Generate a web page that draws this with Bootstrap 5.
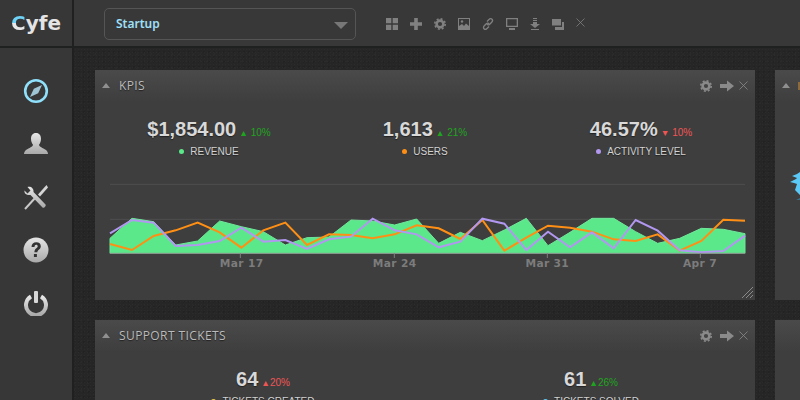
<!DOCTYPE html>
<html lang="en"><head><meta charset="utf-8"><title>Cyfe</title>
<link href="https://cdn.jsdelivr.net/npm/bootstrap@5.3.0/dist/css/bootstrap.min.css" rel="stylesheet">
<style>
html,body{height:400px;overflow:hidden;background:#262626}
.shell{width:800px;height:400px;overflow:hidden;font-family:"Liberation Sans",Arial,sans-serif}
.side{width:74px;flex:none;background:#373737;border-right:2px solid #1f2020;height:400px}
.brand{height:48px;border-bottom:2px solid #1f2020;font:700 20px/46px "DejaVu Sans",sans-serif;color:#e4e4e4;padding-left:11px}
.brand-c{background:linear-gradient(#6fd2f7 50%,#e8e8e8 50%);-webkit-background-clip:text;background-clip:text;color:transparent}
.sidenav{padding-top:30px;gap:27px}
.main{width:726px;flex:none}
.topbar{height:48px;background:#383838;border-bottom:2px solid #1f2020;padding:8px 0 0 30px}
.picker{width:252px;height:32px;border:1px solid #555;border-radius:5px;padding:0 7px 0 11px;font:600 12px/30px "Noto Sans",sans-serif;color:#9fe0fa;text-align:left}
.picker:hover{color:#9fe0fa;border-color:#555}
.tri{width:0;height:0;border-style:solid;border-width:7px 7px 0;border-color:#777 transparent transparent;margin-top:2px}
.tools{margin-left:30px;gap:12px;margin-top:4px;height:24px;color:#808080}
.stage{display:grid;grid-template-columns:660px 660px;grid-auto-rows:min-content;column-gap:20px;row-gap:20px;padding:22px 0 0 21px;width:1400px;height:352px;
 background-color:#262626;background-image:radial-gradient(#2b2b2b 1px,transparent 1px),radial-gradient(#222 1px,transparent 1px),radial-gradient(#2a2a2a 1px,transparent 1px);background-size:3px 3px,5px 5px,7px 7px;background-position:0 0,2px 1px,4px 3px}
.pane{background:linear-gradient(#4a4a4a,#3e3e3e 32px);color:#ccc;position:relative;border:0;border-radius:0;height:230px}
.pane-head{height:32px;padding:0 7px}
.cap{width:0;height:0;border-style:solid;border-width:0 4.5px 5px;border-color:transparent transparent #8f8f8f;margin-right:9px;margin-bottom:1px}
.pane-title{font:400 12px/1 "Open Sans",sans-serif;color:#bbb;text-shadow:0 1px 1px #222;letter-spacing:.4px}
.pane-tools{color:#8a8a8a;margin-bottom:1px}
.pane-tools .gap-a{margin:0 5px 0 8px}
.kpis{padding:15px 6px 0 6px;margin:0}
.kpis-two{padding:15px 0 0 4px}
.kpis>div{padding:0;text-align:center}
.big{font-size:20px;font-weight:700;line-height:24px;color:#d9d9d9;text-shadow:0 1px 1px #222}
.delta{font-size:10px;margin-left:3px}
.up{color:#1ea51e}.down{color:#f05555}
.lbl{font-size:10px;line-height:14px;margin-top:2px;color:#d2d2d2;text-shadow:0 1px 1px #222}
.dot{display:inline-block;width:5px;height:5px;border-radius:50%;margin-right:6px;vertical-align:1px}
.chart{display:block;margin-top:16px}
.chart text{font:700 32px "DejaVu Sans",sans-serif;fill:#7c7c7c;text-anchor:middle;letter-spacing:1px}
.grip{position:absolute;right:2px;bottom:2px}
.swirl{position:absolute;left:15px;top:102px}
.peek{position:absolute;left:23px;top:12px;width:3px;height:8px;background:#8b6a3e}
</style></head>
<body>
<svg width="0" height="0" class="position-absolute">
<defs>
<symbol id="gear" viewBox="0 0 12 12"><circle cx="6" cy="6" r="3.4" fill="none" stroke="currentColor" stroke-width="2.6"/><circle cx="6" cy="6" r="5.2" fill="none" stroke="currentColor" stroke-width="1.6" stroke-dasharray="2 2.08"/></symbol>
<symbol id="arrow" viewBox="0 0 14 12"><path d="M0 4h7V0.5L14 6l-7 5.5V8H0z" fill="currentColor"/></symbol>
<symbol id="cross" viewBox="0 0 9 9"><path d="M.5.5l8 8M8.5.5l-8 8" stroke="currentColor" stroke-width=".8" fill="none"/></symbol>
<linearGradient id="steel" x1="0" y1="0" x2="0" y2="1"><stop offset="0" stop-color="#e6e6e6"/><stop offset="1" stop-color="#a9a9a9"/></linearGradient>
</defs></svg>
<div class="shell d-flex">
 <aside class="side d-flex flex-column">
  <div class="brand"><span class="brand-c">C</span>yfe</div>
  <nav class="sidenav d-flex flex-column align-items-center">
   <svg width="26" height="26" viewBox="0 0 26 26"><circle cx="13" cy="13" r="10.800" fill="none" stroke="#8fe0fb" stroke-width="2.600"/><path d="M19 7l-3.800 8.200L7 19l3.800-8.200z" fill="#9fc4d4"/></svg>
   <svg width="26" height="26" viewBox="0 0 26 26"><path d="M13 2c3.400 0 5 2.600 5 5.800 0 2.700-1 4.700-2 6 .3 2 3.500 3.200 7 5.200 1 .6 2 2.500 2 4H1c0-1.500 1-3.400 2-4 3.500-2 6.700-3.200 7-5.200-1-1.300-2-3.300-2-6C8 4.600 9.600 2 13 2z" fill="url(#steel)"/></svg>
   <svg width="26" height="26" viewBox="0 0 26 26"><path d="M23.500 1l1.500 2.500-8 9-2-2z" fill="#d5d5d5"/><path d="M2 25L13 13" stroke="#c8c8c8" stroke-width="2"/><path d="M1.500 6.500l3 3 3-3-3-3.500c3-1 6.500 1 6 5l12 12.500c1 1.500-1.500 4-3 3L7.500 11c-4 .5-6.500-1.500-6-4.500z" fill="url(#steel)"/></svg>
   <svg width="26" height="26" viewBox="0 0 26 26"><circle cx="13" cy="13" r="12.500" fill="url(#steel)"/><path d="M8.500 10c0-3 2-4.800 4.800-4.800s4.500 1.600 4.500 4c0 3.300-3.400 3.300-3.400 6h-3c0-4 3.300-4 3.300-6 0-1-.7-1.500-1.500-1.500-1 0-1.600.8-1.700 2.300z" fill="#333"/><rect x="10.900" y="17" width="3" height="3" fill="#333"/></svg>
   <svg width="26" height="26" viewBox="0 0 26 26"><path d="M8 6.500a10 10 0 1 0 10 0" fill="none" stroke="url(#steel)" stroke-width="4"/><rect x="11" y="1" width="4" height="12" rx="1" fill="#d8d8d8"/></svg>
  </nav>
 </aside>
 <div class="main">
  <header class="topbar d-flex">
   <button type="button" class="btn picker d-flex justify-content-between align-items-center">Startup<span class="tri"></span></button>
   <div class="tools d-flex align-items-center">
    <svg width="12" height="12" viewBox="0 0 12 12"><path d="M0 0h5.300v5.300H0zM6.700 0H12v5.300H6.700zM0 6.700h5.300V12H0zM6.700 6.700H12V12H6.700z" fill="#808080"/></svg>
    <svg width="12" height="12" viewBox="0 0 12 12"><path d="M4.200 0h3.600v4.200H12v3.600H7.800V12H4.200V7.800H0V4.200h4.200z" fill="#808080"/></svg>
    <svg width="12" height="12"><use href="#gear"/></svg>
    <svg width="12" height="12" viewBox="0 0 12 12"><path d="M0 0h12v12H0z M1 1v10h10V1z" fill="#808080" fill-rule="evenodd"/><path d="M1 11V8l3-2 2 2 2-2.500L11 8v3z" fill="#808080"/><circle cx="4" cy="3.500" r="1.200" fill="#808080"/></svg>
    <svg width="12" height="12" viewBox="0 0 12 12"><g fill="none" stroke="#808080" stroke-width="1.300"><path d="M5 3.500l2-2c1-1 2.300-1 3 -.3s.7 2-.3 3l-2 2c-1 1-2.200.8-2.800 0"/><path d="M7 8.500l-2 2c-1 1-2.300 1-3 .3s-.7-2 .3-3l2-2c1-1 2.200-.8 2.800 0"/></g></svg>
    <svg width="12" height="12" viewBox="0 0 12 12"><path d="M0 0h12v9H0zM1.300 1.300v6.400h9.400V1.300zM3 10h6v2H3z" fill="#808080" fill-rule="evenodd"/></svg>
    <svg width="10" height="12" viewBox="0 0 10 12"><path d="M3 0h4v1H3zM3 2h4v1H3zM3 4h4v2h3l-5 4-5-4h3zM1 11h8v1H1z" fill="#808080"/></svg>
    <svg width="12" height="11" viewBox="0 0 12 11"><path d="M0 0h9v6.500H0z" fill="#808080"/><path d="M10 3h2v8H3V8h7z" fill="#808080"/></svg>
    <svg width="9" height="9" class="mb-1"><use href="#cross"/></svg>
   </div>
  </header>
  <main class="stage">
   <section class="card pane">
    <div class="pane-head d-flex align-items-center justify-content-between">
     <div class="d-flex align-items-center"><span class="cap"></span><span class="pane-title">KPIS</span></div>
     <div class="pane-tools d-flex align-items-center">
      <svg width="12" height="12"><use href="#gear"/></svg><svg width="14" height="12" class="gap-a"><use href="#arrow"/></svg><svg width="9" height="9"><use href="#cross"/></svg>
     </div>
    </div>
    <div class="row kpis">
     <div class="col-4"><span class="big">$1,854.00</span><span class="delta up"><small>▲</small> 10%</span><div class="lbl"><span class="dot" style="background:#5be88a"></span>REVENUE</div></div>
     <div class="col-4"><span class="big">1,613</span><span class="delta up"><small>▲</small> 21%</span><div class="lbl"><span class="dot" style="background:#ff8f14"></span>USERS</div></div>
     <div class="col-4"><span class="big">46.57%</span><span class="delta down"><small>▼</small> 10%</span><div class="lbl"><span class="dot" style="background:#b197f0"></span>ACTIVITY LEVEL</div></div>
    </div>
    <svg class="chart" width="660" height="100" viewBox="0 0 1980 300" aria-hidden="true">
     <path d="M45 28H1950M45 133H1950" stroke="#4f4f4f" stroke-width="3"/>
     <polygon fill="#5be88a" stroke="#6fe89a" stroke-width="3" points="45,235 45,190 111,130 176,140 242,210 308,198 374,138 439,155 505,170 571,210 636,188 702,186 768,135 833,138 899,150 965,132 1031,205 1096,172 1162,197 1228,165 1294,130 1359,212 1425,172 1491,130 1556,130 1622,170 1688,205 1754,190 1819,160 1885,163 1950,176 1950,235"/>
     <polyline fill="none" stroke="#ff8f14" stroke-width="6" points="45,207 111,225 176,183 242,166 308,143 374,172 439,218 505,166 571,143 636,210 702,178 768,180 833,190 899,178 965,151 1031,160 1096,192 1162,135 1228,227 1294,188 1359,152 1425,158 1491,170 1556,193 1622,198 1688,178 1754,227 1819,198 1885,134 1950,137"/>
     <polyline fill="none" stroke="#b197f0" stroke-width="6" points="45,175 111,135 176,143 242,213 308,210 374,198 439,158 505,200 571,195 636,222 702,193 768,185 833,131 899,166 965,178 1031,217 1096,200 1162,131 1228,146 1294,225 1359,170 1425,217 1491,172 1556,220 1622,135 1688,167 1754,226 1819,232 1885,228 1950,182"/>
     <path d="M45 235H1950" stroke="#8a8a8a" stroke-width="3"/>
     <path d="M436 235v14M898 235v14M1357 235v14M1816 235v14" stroke="#7c7c7c" stroke-width="3"/>
     <text x="440" y="276">Mar 17</text><text x="899" y="276">Mar 24</text><text x="1357" y="276">Mar 31</text><text x="1815" y="276">Apr 7</text>
    </svg>
    <svg class="grip" width="11" height="11" viewBox="0 0 11 11"><path d="M0 11L11 0M4 11l7-7M8 11l3-3" stroke="#8a8a8a" stroke-width="1"/></svg>
   </section>
   <section class="card pane">
    <div class="pane-head d-flex align-items-center"><span class="cap"></span><span class="peek"></span></div>
    <svg class="swirl" width="10" height="30" viewBox="0 0 10 30"><path d="M10 0L7 2 2 4l5 2-1 1-6 3 4 1 3 1-2 6 5 5z" fill="#5cc8f5"/><path d="M10 26l-4 2h4z" fill="#39708a"/></svg>
   </section>
   <section class="card pane">
    <div class="pane-head d-flex align-items-center justify-content-between">
     <div class="d-flex align-items-center"><span class="cap"></span><span class="pane-title">SUPPORT TICKETS</span></div>
     <div class="pane-tools d-flex align-items-center">
      <svg width="12" height="12"><use href="#gear"/></svg><svg width="14" height="12" class="gap-a"><use href="#arrow"/></svg><svg width="9" height="9"><use href="#cross"/></svg>
     </div>
    </div>
    <div class="row kpis kpis-two">
     <div class="col-6"><span class="big">64</span><span class="delta down"><small>▲</small>20%</span><div class="lbl"><span class="dot" style="background:#e8c84a"></span>TICKETS CREATED</div></div>
     <div class="col-6"><span class="big">61</span><span class="delta up"><small>▲</small>26%</span><div class="lbl"><span class="dot" style="background:#5cc8f5"></span>TICKETS SOLVED</div></div>
    </div>
   </section>
   <section class="card pane"></section>
  </main>
 </div>
</div>
<script src="https://cdn.jsdelivr.net/npm/bootstrap@5.3.0/dist/js/bootstrap.bundle.min.js"></script>
</body></html>
